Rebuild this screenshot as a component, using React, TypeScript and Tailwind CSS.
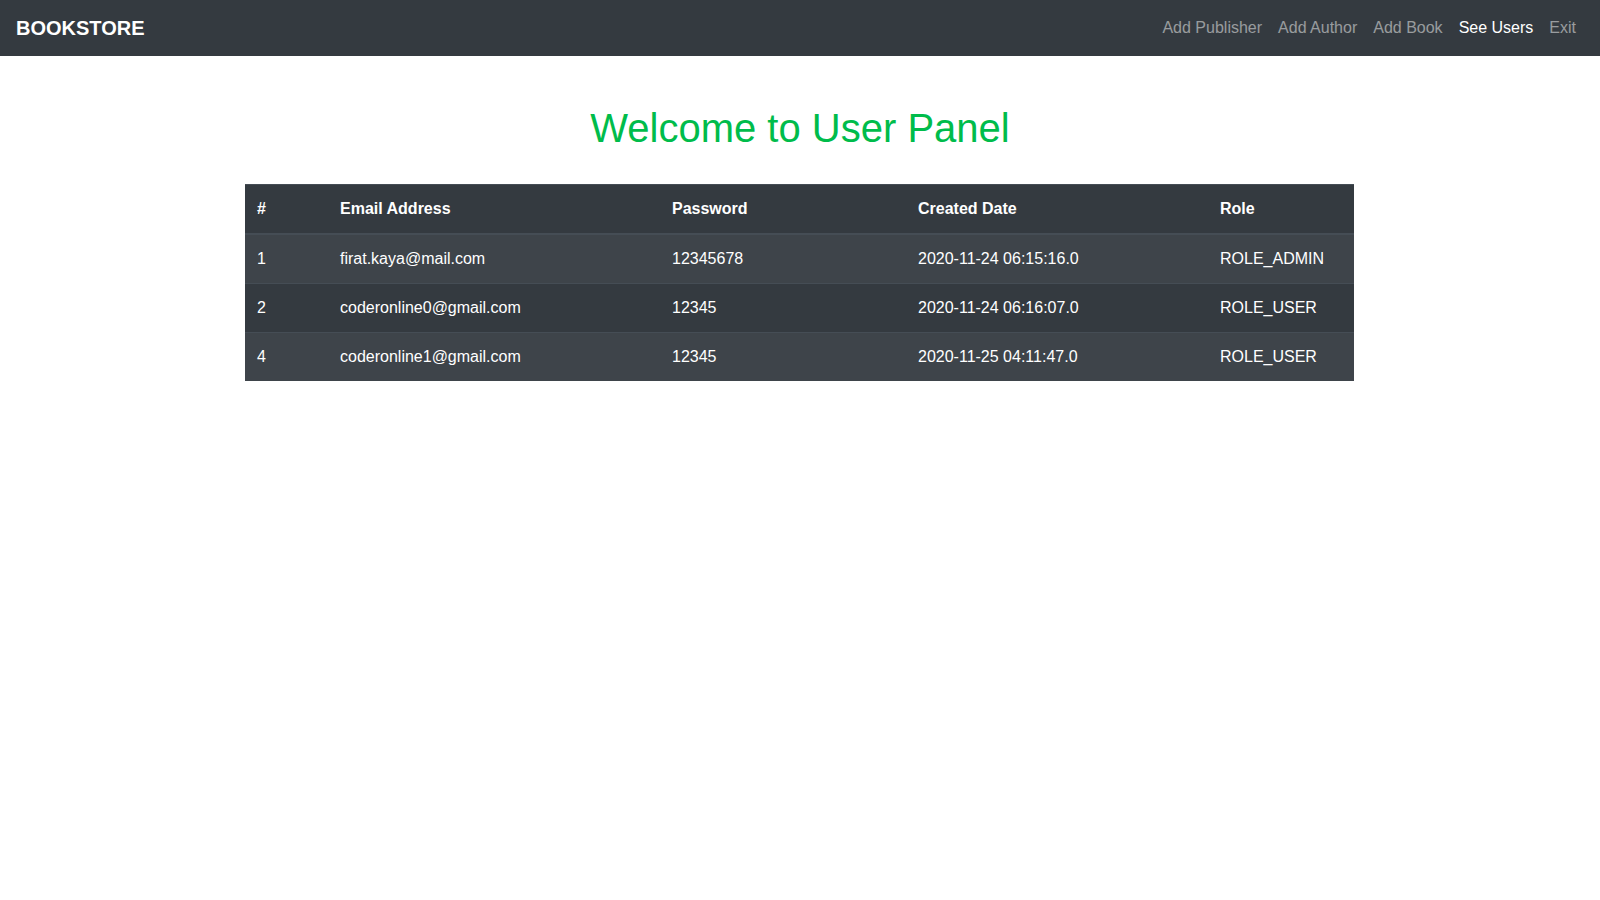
import React from "react";

const users = [
  { id: "1", email: "firat.kaya@mail.com", password: "12345678", date: "2020-11-24 06:15:16.0", role: "ROLE_ADMIN" },
  { id: "2", email: "coderonline0@gmail.com", password: "12345", date: "2020-11-24 06:16:07.0", role: "ROLE_USER" },
  { id: "4", email: "coderonline1@gmail.com", password: "12345", date: "2020-11-25 04:11:47.0", role: "ROLE_USER" },
];

export default function App() {
  return (
    <div className="min-h-screen bg-white text-[16px] text-[#212529]" style={{ fontFamily: '"Liberation Sans", Arial, Helvetica, sans-serif' }}>
      <nav className="flex h-[56px] items-center justify-between bg-[#343a40] px-4">
        <a className="text-[20px] font-bold leading-[30px] text-white">BOOKSTORE</a>
        <ul className="flex items-center">
          <li><a className="block px-2 py-2 text-[rgba(255,255,255,0.5)]">Add Publisher</a></li>
          <li><a className="block px-2 py-2 text-[rgba(255,255,255,0.5)]">Add Author</a></li>
          <li><a className="block px-2 py-2 text-[rgba(255,255,255,0.5)]">Add Book</a></li>
          <li><a className="block px-2 py-2 text-white">See Users</a></li>
          <li><a className="block px-2 py-2 text-[rgba(255,255,255,0.5)]">Exit</a></li>
        </ul>
      </nav>
      <div className="mx-auto w-[1140px] px-[15px]">
        <h1 className="mt-[48px] mb-[32px] text-center text-[40px] font-normal leading-[48px] text-[#00bc4b]">
          Welcome to User Panel
        </h1>
        <table className="w-[1109px] table-fixed border-collapse bg-[#343a40] text-white">
          <colgroup>
            <col className="w-[83px]" />
            <col className="w-[332px]" />
            <col className="w-[246px]" />
            <col className="w-[302px]" />
            <col />
          </colgroup>
          <thead>
            <tr className="border-t border-[#454d55]">
              <th className="border-b-2 border-[#454d55] p-3 text-left font-bold leading-6">#</th>
              <th className="border-b-2 border-[#454d55] p-3 text-left font-bold leading-6">Email Address</th>
              <th className="border-b-2 border-[#454d55] p-3 text-left font-bold leading-6">Password</th>
              <th className="border-b-2 border-[#454d55] p-3 text-left font-bold leading-6">Created Date</th>
              <th className="border-b-2 border-[#454d55] p-3 text-left font-bold leading-6">Role</th>
            </tr>
          </thead>
          <tbody>
            {users.map((u, i) => (
              <tr key={u.id} className={i % 2 === 0 ? "bg-[#3e444a]" : "bg-[#343a40]"}>
                <td className="border-t border-[#454d55] p-3 leading-6">{u.id}</td>
                <td className="border-t border-[#454d55] p-3 leading-6">{u.email}</td>
                <td className="border-t border-[#454d55] p-3 leading-6">{u.password}</td>
                <td className="border-t border-[#454d55] p-3 leading-6">{u.date}</td>
                <td className="border-t border-[#454d55] p-3 leading-6">{u.role}</td>
              </tr>
            ))}
          </tbody>
        </table>
      </div>
    </div>
  );
}
